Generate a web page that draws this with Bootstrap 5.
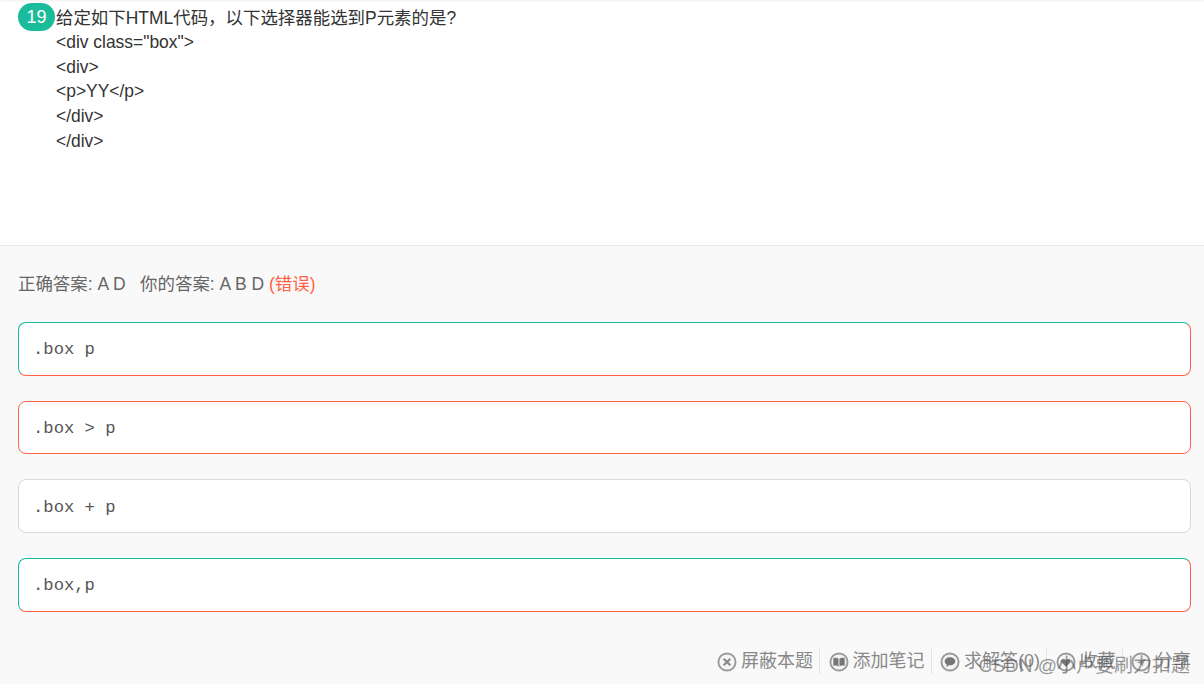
<!DOCTYPE html>
<html lang="zh">
<head>
<meta charset="utf-8">
<title>题目</title>
<link href="https://cdn.jsdelivr.net/npm/bootstrap@5.3.0/dist/css/bootstrap.min.css" rel="stylesheet">
<style>
html,body{height:684px;overflow:hidden}
body{position:relative;background:#f9f9f9;font-family:"Liberation Sans","Noto Sans CJK SC",sans-serif;color:#333;font-size:17.45px}
.qtop{height:246px;background:#fff;border-bottom:1px solid #e8e8e8;padding:3px 0 0 18px;box-shadow:inset 0 3px 3px -2px #eee}
.qnum{width:37px;height:28px;border-radius:14px;background:#1abc9c;color:#fff;line-height:28px;text-align:center;font-size:18px;flex:none}
.qbody{line-height:24.6px;padding-top:2.6px;margin-left:1px}
.qanswer{color:#666;line-height:24px;padding:26px 18px 0;height:76px}
.qanswer .wrong{color:#ff6347}
.qopt{height:53.67px;margin:0 13px 25px 18px;border:1px solid #d9d9d9;border-radius:8px;background:#fff;padding:3px 15px 0 14px;display:flex;align-items:center;font-family:"Liberation Mono",monospace;font-size:17.2px;color:#555}
.qopt.mix{border-color:#1abc9c #ff6347 #ff6347 #1abc9c}
.qopt.bad{border-color:#ff6347}
.qtools{position:absolute;right:13px;top:649px;color:#888;font-size:18px;line-height:25px}
.qtool{display:flex;align-items:center;gap:4px;padding:0 6px 0 8.5px;border-right:1px solid #e3e3e3;white-space:nowrap}
.qtool:last-child{border-right:0;padding-right:0}
.qtool svg{width:20px;height:20px;flex:none}
.qmark{position:absolute;right:14px;top:653px;color:rgba(80,80,80,.6);font-size:19px;line-height:26px;white-space:nowrap}
</style>
</head>
<body>
<section class="qtop d-flex align-items-start">
  <span class="qnum">19</span>
  <div class="qbody">给定如下HTML代码，以下选择器能选到P元素的是?<br>&lt;div class="box"&gt;<br>&lt;div&gt;<br>&lt;p&gt;YY&lt;/p&gt;<br>&lt;/div&gt;<br>&lt;/div&gt;</div>
</section>
<div class="qanswer">正确答案: A D &nbsp; 你的答案: A B D <span class="wrong">(错误)</span></div>
<div class="qopt mix">.box p</div>
<div class="qopt bad">.box &gt; p</div>
<div class="qopt">.box + p</div>
<div class="qopt mix">.box,p</div>
<div class="qtools d-flex">
  <div class="qtool"><svg viewBox="0 0 21 21"><circle cx="10.5" cy="10.5" r="9" fill="#f4f4f4" stroke="#999" stroke-width="2"/><path d="M7 7l7 7M14 7l-7 7" stroke="#888" stroke-width="2.2" fill="none"/></svg>屏蔽本题</div>
  <div class="qtool"><svg viewBox="0 0 21 21"><circle cx="10.5" cy="10.5" r="9" fill="#f4f4f4" stroke="#999" stroke-width="2"/><path d="M4.5 6.500c2.500-.8 4.500-.5 5.500.6v8c-1-.9-3-1.200-5.500-.6zM16.500 6.500c-2.500-.8-4.500-.5-5.500.6v8c1-.9 3-1.200 5.500-.6z" fill="#777"/></svg>添加笔记</div>
  <div class="qtool"><svg viewBox="0 0 21 21"><circle cx="10.500" cy="10.500" r="9" fill="#f4f4f4" stroke="#999" stroke-width="2"/><path d="M10.500 5.500c-3.300 0-5.500 1.900-5.500 4.300 0 1.500.9 2.700 2.200 3.500l-.7 2.400 3-1.700h1c3.300 0 5.500-1.900 5.500-4.200s-2.200-4.300-5.500-4.300z" fill="#777"/></svg>求解答(0)</div>
  <div class="qtool"><svg viewBox="0 0 21 21"><circle cx="10.500" cy="10.500" r="9" fill="#f4f4f4" stroke="#999" stroke-width="2"/><path d="M10.500 15.500l-4.500-4.500c-2-2.500 1.500-5.500 4.500-2.500 3-3 6.500 0 4.500 2.500z" fill="#777"/></svg>收藏</div>
  <div class="qtool"><svg viewBox="0 0 21 21"><circle cx="10.500" cy="10.500" r="9" fill="#f4f4f4" stroke="#999" stroke-width="2"/><path d="M6 11l9-4-3 8-2-3z" fill="#999"/></svg>分享</div>
</div>
<div class="qmark">CSDN @小卢要刷力扣题</div>
<script src="https://cdn.jsdelivr.net/npm/bootstrap@5.3.0/dist/js/bootstrap.bundle.min.js"></script>
</body>
</html>
